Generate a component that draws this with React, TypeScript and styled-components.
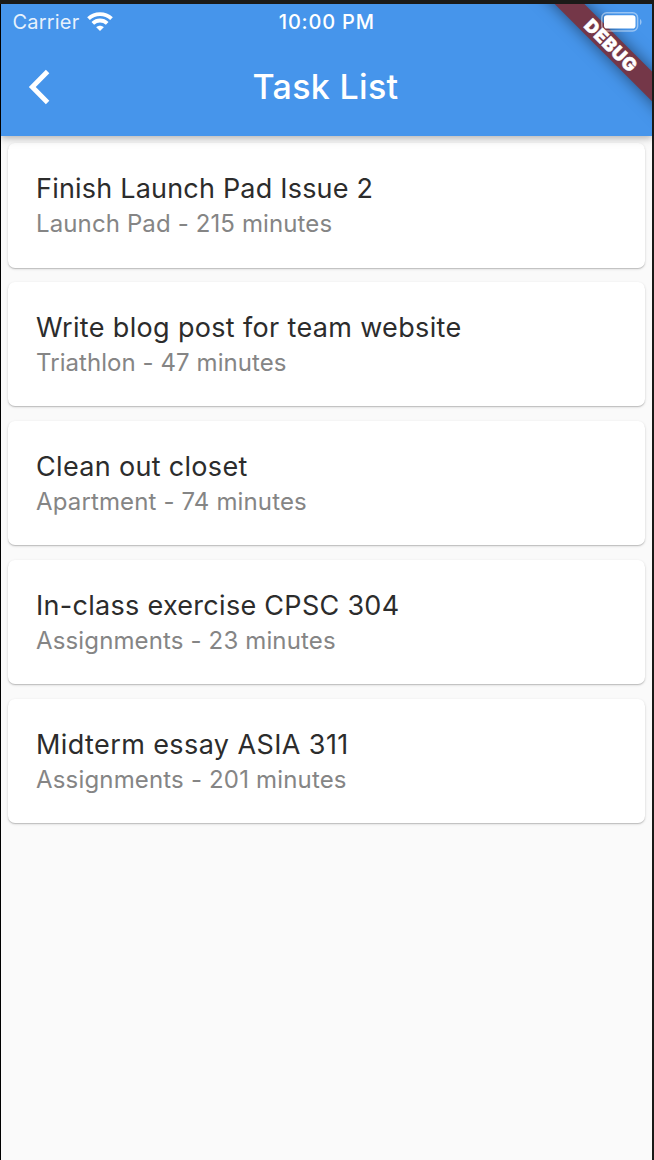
import React from "react";
import styled, { createGlobalStyle } from "styled-components";

const GlobalStyle = createGlobalStyle`
  * { box-sizing: border-box; }
  body { margin: 0; background: #1a1a18; }
`;

const Screen = styled.div`
  position: relative;
  height: 1156px;
  margin: 4px 2px 0 1px;
  overflow: hidden;
  background: #fafafa;
  font-family: Inter, "Liberation Sans", sans-serif;
  box-shadow: -1px 0 0 #000;
`;

const AppBar = styled.header`
  position: relative;
  height: 132px;
  background: #4695eb;
  color: #fff;
  box-shadow: 0 2px 6px rgba(0, 0, 0, 0.2), 0 4px 10px rgba(0, 0, 0, 0.1);
`;

const StatusBar = styled.div`
  position: relative;
  z-index: 3;
  display: grid;
  grid-template-columns: 1fr auto 1fr;
  align-items: center;
  height: 35px;
  padding: 0 10px 0 11.5px;
`;

const Carrier = styled.div`
  display: flex;
  align-items: center;
  gap: 8px;
  font-size: 20px;
  letter-spacing: 0.2px;
  color: rgba(255, 255, 255, 0.88);
`;

const Clock = styled.div`
  margin-left: -1px;
  font-size: 20px;
  font-weight: 500;
  letter-spacing: 0.8px;
`;

const Battery = styled.svg`
  justify-self: end;
`;

const Toolbar = styled.div`
  display: grid;
  grid-template-columns: 96px 1fr 98px;
  align-items: center;
  height: 96px;
`;

const BackButton = styled.button`
  display: flex;
  height: 96px;
  padding: 0 0 0 26px;
  align-items: center;
  border: 0;
  background: none;
  color: inherit;
`;

const PageTitle = styled.h1`
  margin: 0;
  text-align: center;
  font-size: 34px;
  line-height: 42px;
  font-weight: 500;
  letter-spacing: 0.3px;
`;

const TaskList = styled.main`
  display: flex;
  flex-direction: column;
  gap: 14.3px;
  padding: 7px;
`;

const Card = styled.article`
  height: 124.6px;
  padding: 28.45px 28px 0;
  border-radius: 7px;
  background: #fff;
  box-shadow: 0 1px 1px rgba(0, 0, 0, 0.16), 0 1px 3px rgba(0, 0, 0, 0.14);
`;

const TaskName = styled.h2<{ $tracking: number }>`
  margin: 0;
  font-size: 27px;
  line-height: 36px;
  font-weight: 400;
  letter-spacing: ${(p) => p.$tracking}px;
  color: #2c2c2c;
  white-space: nowrap;
`;

const TaskMeta = styled.p<{ $tracking: number }>`
  margin: 0;
  font-size: 24px;
  line-height: 34px;
  letter-spacing: ${(p) => p.$tracking}px;
  color: #858585;
  white-space: nowrap;
`;

const Ribbon = styled.div`
  position: absolute;
  z-index: 2;
  left: 509.5px;
  top: 31px;
  width: 200px;
  height: 21.2px;
  transform: rotate(45deg);
  background: #743748;
  box-shadow: 0 0 16px rgba(0, 0, 0, 0.5);
  color: #fff;
  font-size: 18px;
  line-height: 21.2px;
  font-weight: 900;
  letter-spacing: 0.7px;
  -webkit-text-stroke: 0.5px #fff;
  text-align: center;
`;

const tasks = [
  { name: "Finish Launch Pad Issue 2", project: "Launch Pad", minutes: 215, tracking: 0.2, metaTracking: 0.12 },
  { name: "Write blog post for team website", project: "Triathlon", minutes: 47, tracking: 0.34, metaTracking: 0.06 },
  { name: "Clean out closet", project: "Apartment", minutes: 74, tracking: 0.32, metaTracking: 0.14 },
  { name: "In-class exercise CPSC 304", project: "Assignments", minutes: 23, tracking: 0.29, metaTracking: 0.14 },
  { name: "Midterm essay ASIA 311", project: "Assignments", minutes: 201, tracking: 0.4, metaTracking: 0.17 },
];

export default function App() {
  return (
    <>
      <GlobalStyle />
      <Screen>
        <AppBar>
          <StatusBar>
            <Carrier>
              <span>Carrier</span>
              <svg width="26" height="19" viewBox="0 0 26 19" fill="none" stroke="#fff" strokeWidth="3.9">
                <path d="M1.5 6.7C8 .6 18 .6 24.5 6.7" />
                <path d="M5.8 11.4C10 7.6 16 7.6 20.2 11.4" />
                <path d="M13 18.9 9.2 15.2C11.3 13.2 14.7 13.2 16.8 15.2Z" fill="#fff" stroke="none" />
              </svg>
            </Carrier>
            <Clock>10:00 PM</Clock>
            <Battery width="41" height="20" viewBox="0 0 41 20">
              <rect x="0.8" y="0.8" width="35.8" height="18.2" rx="5" fill="none" stroke="#fff" strokeOpacity=".45" strokeWidth="1.5" />
              <rect x="3" y="3.2" width="31.5" height="13.4" rx="2.8" fill="#fff" />
              <path d="M39 7v6c2-1 2-5 0-6Z" fill="#fff" fillOpacity=".45" />
            </Battery>
          </StatusBar>
          <Toolbar>
            <BackButton aria-label="Back">
              <svg width="24" height="38" viewBox="0 0 24 38" fill="none" stroke="#fff" strokeWidth="4.9">
                <path d="M20.6 3.6 5.3 19l15.3 15.4" />
              </svg>
            </BackButton>
            <PageTitle>Task List</PageTitle>
          </Toolbar>
        </AppBar>
        <TaskList>
          {tasks.map((task) => (
            <Card key={task.name}>
              <TaskName $tracking={task.tracking}>{task.name}</TaskName>
              <TaskMeta $tracking={task.metaTracking}>
                {task.project} - {task.minutes} minutes
              </TaskMeta>
            </Card>
          ))}
        </TaskList>
        <Ribbon>DEBUG</Ribbon>
      </Screen>
    </>
  );
}
